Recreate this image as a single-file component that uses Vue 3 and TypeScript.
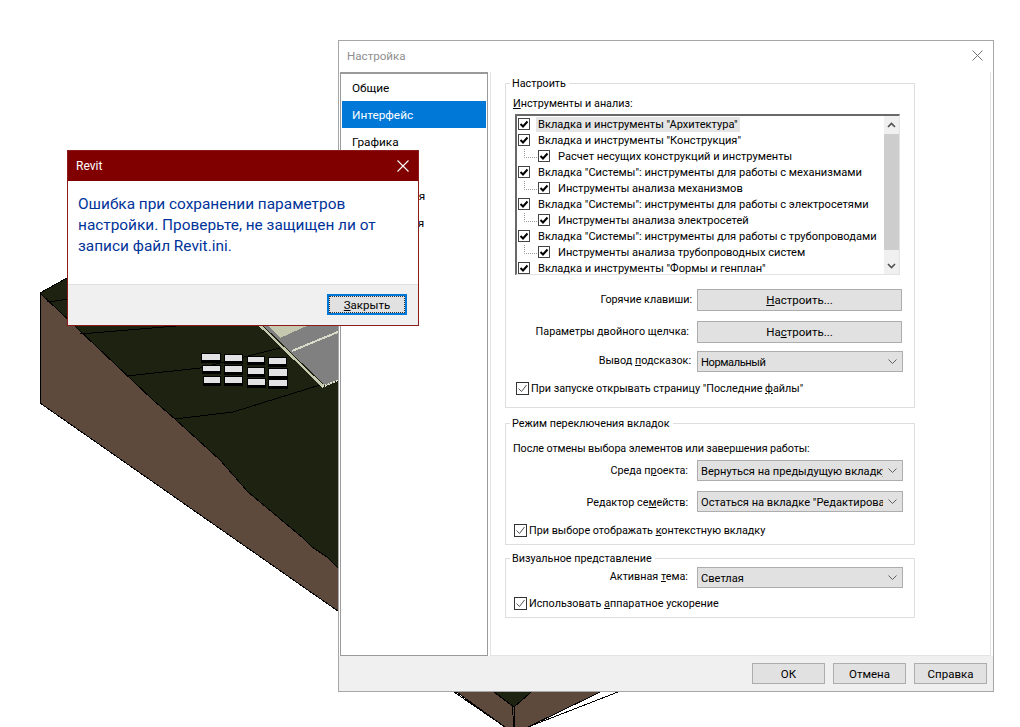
<script setup lang="ts">
interface TreeRow { label: string; child: boolean }
const navItems: string[] = ['Общие', 'Интерфейс', 'Графика', 'Аппаратура', 'Размещения', 'Орфография']
const rows: TreeRow[] = [
  { label: 'Вкладка и инструменты "Архитектура"', child: false },
  { label: 'Вкладка и инструменты "Конструкция"', child: false },
  { label: 'Расчет несущих конструкций и инструменты', child: true },
  { label: 'Вкладка "Системы": инструменты для работы с механизмами', child: false },
  { label: 'Инструменты анализа механизмов', child: true },
  { label: 'Вкладка "Системы": инструменты для работы с электросетями', child: false },
  { label: 'Инструменты анализа электросетей', child: true },
  { label: 'Вкладка "Системы": инструменты для работы с трубопроводами', child: false },
  { label: 'Инструменты анализа трубопроводных систем', child: true },
  { label: 'Вкладка и инструменты "Формы и генплан"', child: false },
]
interface Tile { x: number; y: number; w: number; h: number }
const tiles: Tile[] = [
  { x: 201, y: 353, w: 20, h: 9 }, { x: 202, y: 365, w: 19, h: 8 }, { x: 203, y: 376, w: 18, h: 9 },
  { x: 224, y: 354, w: 19, h: 9 }, { x: 224, y: 365, w: 19, h: 9 }, { x: 224, y: 376, w: 19, h: 9 },
  { x: 247, y: 356, w: 18, h: 8 }, { x: 247, y: 367, w: 18, h: 9 }, { x: 247, y: 378, w: 19, h: 9 },
  { x: 268, y: 357, w: 19, h: 9 }, { x: 268, y: 368, w: 20, h: 10 }, { x: 268, y: 379, w: 20, h: 9 },
]
</script>

<template>
  <div class="desk">
    <svg class="model" width="1020" height="727" viewBox="0 0 1020 727">
      <g shape-rendering="crispEdges" stroke="#000" stroke-width="1">
        <polygon points="40,293 153,400 175,419 220,460 248,492 303,538 312,547 327,557 345,575 345,616 40,403" fill="#5e4a3d" />
        <polygon points="40,293 67,278 345,278 345,575 327,557 312,547 303,538 248,492 220,460 175,419 153,400" fill="#1e2311" />
        <polyline points="47,302 70,299" fill="none" />
        <polyline points="80,334 200,324" fill="none" />
        <polyline points="127,376 200,368 280,348" fill="none" />
        <polyline points="175,419 233,412 320,385" fill="none" />
        <polygon points="260,325 345,325 345,378 323,386" fill="#808080" stroke="none" />
        <polygon points="267,325 309,325 280,338" fill="#c6c7af" stroke="none" />
        <polyline points="260,325 323,386" fill="none" stroke="#c6c7af" stroke-width="3" />
        <polyline points="262,325 323,384" fill="none" stroke="#1e2311" stroke-width="1" />
        <polyline points="292,351 345,329" fill="none" stroke="#dadac8" stroke-width="2" />
        <polyline points="322,387 345,377" fill="none" stroke="#dadac8" stroke-width="2" stroke-dasharray="2 1" />
        <polygon points="440,680 505,727 518,727 518,680" fill="#5e4a3d" />
        <polygon points="510,680 625,680 528,727 514,727" fill="#5e4a3d" />
        <polygon points="478,680 545,680 514,707" fill="#1e2311" />
        <polyline points="514,707 514,727" fill="none" />
        <polyline points="454,692 505,727" fill="none" />
        <polyline points="618,692 528,727" fill="none" />
      </g>
      <g v-for="(t, i) in tiles" :key="i" shape-rendering="crispEdges">
        <rect :x="t.x" :y="t.y" :width="t.w" :height="t.h + 1" fill="#000" />
        <rect :x="t.x + 1" :y="t.y + 1" :width="t.w - 2" :height="t.h - 3" fill="#e2e2e5" />
      </g>
    </svg>

    <section class="options">
      <header class="options-title">
        <span>Настройка</span>
        <svg class="options-close" width="11" height="11" viewBox="0 0 11 11"><path d="M0.5 0.5 10.5 10.5M10.5 0.5 0.5 10.5" stroke="#757575" stroke-width="1" fill="none" /></svg>
      </header>
      <div class="options-body">
        <nav class="nav">
          <div v-for="(item, i) in navItems" :key="item" class="nav-item" :class="{ active: i === 1 }">{{ item }}</div>
        </nav>
        <main class="panel">
          <fieldset class="group group-a">
            <legend>Настроить</legend>
            <div class="caption"><u>И</u>нструменты и анализ:</div>
            <div class="tree">
              <div class="tree-rows">
                <div v-for="(r, i) in rows" :key="i" class="tree-row" :class="{ child: r.child }">
                  <svg v-if="r.child" class="branch" width="13" height="16" viewBox="0 0 13 16"><path d="M0.5 1V9.5H13" fill="none" stroke="#9a9a9a" stroke-dasharray="1 1" /></svg>
                  <svg class="tick" width="12" height="12" viewBox="0 0 12 12"><rect x="0.5" y="0.5" width="11" height="11" fill="#fff" stroke="#444" /><path d="M2.5 6 5 8.5 9.5 3.5" fill="none" stroke="#000" stroke-width="2" /></svg>
                  <span class="tree-label" :class="{ current: i === 0 }">{{ r.label }}</span>
                </div>
              </div>
              <div class="scroll">
                <svg class="scroll-arrow" width="15" height="18" viewBox="0 0 15 18"><path d="M4 11 7.5 7.5 11 11" fill="none" stroke="#505050" stroke-width="1.6" /></svg>
                <div class="scroll-thumb"></div>
                <svg class="scroll-arrow end" width="15" height="18" viewBox="0 0 15 18"><path d="M4 8 7.5 11.5 11 8" fill="none" stroke="#505050" stroke-width="1.6" /></svg>
              </div>
            </div>
            <div class="field field-hot"><span class="field-label">Горячие клавиши:</span><button class="btn wide"><u>Н</u>астроить...</button></div>
            <div class="field field-dbl"><span class="field-label l2">Параметры двойного щелчка:</span><button class="btn wide">На<u>с</u>троить...</button></div>
            <div class="field field-tip"><span class="field-label l1">Вывод <u>п</u>одсказок:</span>
              <div class="select"><span class="select-text tight">Нормальный</span><svg width="9" height="5" viewBox="0 0 9 5"><path d="M0.5 0.5 4.5 4.5 8.5 0.5" fill="none" stroke="#606060" /></svg></div>
            </div>
            <label class="check check-a">
              <svg width="13" height="13" viewBox="0 0 13 13"><rect x="0.5" y="0.5" width="12" height="12" fill="#fff" stroke="#333" /><path d="M2.5 6.5 5.5 9.5 10.5 3" fill="none" stroke="#555" stroke-width="1" /></svg>
              <span>При запуске открывать страницу "Последние <u>ф</u>айлы"</span>
            </label>
          </fieldset>

          <fieldset class="group group-b">
            <legend>Режим переключения вкладок</legend>
            <div class="caption narrow">После отмены выбора элементов или завершения работы:</div>
            <div class="field field-env"><span class="field-label l3">Среда п<u>р</u>оекта:</span>
              <div class="select"><span class="select-text">Вернуться на предыдущую вкладку</span><svg width="9" height="5" viewBox="0 0 9 5"><path d="M0.5 0.5 4.5 4.5 8.5 0.5" fill="none" stroke="#606060" /></svg></div>
            </div>
            <div class="field field-fam"><span class="field-label l3">Редактор се<u>м</u>ейств:</span>
              <div class="select"><span class="select-text">Остаться на вкладке "Редактирование"</span><svg width="9" height="5" viewBox="0 0 9 5"><path d="M0.5 0.5 4.5 4.5 8.5 0.5" fill="none" stroke="#606060" /></svg></div>
            </div>
            <label class="check check-b">
              <svg width="13" height="13" viewBox="0 0 13 13"><rect x="0.5" y="0.5" width="12" height="12" fill="#fff" stroke="#333" /><path d="M2.5 6.5 5.5 9.5 10.5 3" fill="none" stroke="#555" stroke-width="1" /></svg>
              <span>При выборе отображать <u>к</u>онтекстную вкладку</span>
            </label>
          </fieldset>

          <fieldset class="group group-c">
            <legend>Визуальное представление</legend>
            <div class="field field-theme"><span class="field-label l3">Активная <u>т</u>ема:</span>
              <div class="select"><span class="select-text">Светлая</span><svg width="9" height="5" viewBox="0 0 9 5"><path d="M0.5 0.5 4.5 4.5 8.5 0.5" fill="none" stroke="#606060" /></svg></div>
            </div>
            <label class="check check-c">
              <svg width="13" height="13" viewBox="0 0 13 13"><rect x="0.5" y="0.5" width="12" height="12" fill="#fff" stroke="#333" /><path d="M2.5 6.5 5.5 9.5 10.5 3" fill="none" stroke="#555" stroke-width="1" /></svg>
              <span>Использовать <u>а</u>ппаратное ускорение</span>
            </label>
          </fieldset>
        </main>
      </div>
      <footer class="options-foot">
        <button class="btn foot">ОК</button>
        <button class="btn foot">Отмена</button>
        <button class="btn foot">Справка</button>
      </footer>
    </section>

    <section class="alert">
      <header class="alert-title">
        <span>Revit</span>
        <svg width="12" height="12" viewBox="0 0 12 12"><path d="M0.5 0.5 11.5 11.5M11.5 0.5 0.5 11.5" stroke="#fff" stroke-width="1.1" fill="none" /></svg>
      </header>
      <div class="alert-body">Ошибка при сохранении параметров настройки. Проверьте, не защищен ли от записи файл Revit.ini.</div>
      <footer class="alert-foot"><button class="btn close-btn"><span class="focus"><u>З</u>акрыть</span></button></footer>
    </section>
  </div>
</template>

<style scoped>
.desk { position: relative; width: 1020px; height: 727px; overflow: hidden; background: #fff; font-family: Roboto, "Noto Sans", sans-serif; font-size: 10.8px; color: #000; }
.model { position: absolute; left: 0; top: 0; }
button { font: inherit; color: inherit; padding: 0; }

.options { position: absolute; left: 338px; top: 40px; width: 656px; height: 652px; box-sizing: border-box; border: 1px solid #a6a6a6; background: #fff; display: flex; flex-direction: column; }
.options-title { height: 31px; flex: none; box-sizing: border-box; padding: 0 10px 2px 8px; display: flex; align-items: center; justify-content: space-between; color: #8f8f8f; font-size: 11.6px; }
.options-close { margin-bottom: 1px; }
.options-body { height: 584px; flex: none; display: flex; padding-left: 1px; }
.nav { width: 148px; box-sizing: border-box; border: 1px solid #9a9a9a; border-top-width: 2px; padding: 0 1px; flex: none; }
.nav-item { height: 27px; line-height: 29px; padding-left: 10px; font-size: 11.8px; }
.nav-item:nth-child(n+4) { letter-spacing: 0.25px; }
.nav-item.active { background: #0078d7; color: #fff; }
.panel { margin-left: 2px; width: 501px; box-sizing: border-box; border: 1px solid #e3e3e3; border-top: 0; padding: 0 0 0 14px; }

.group { margin: 0; padding: 0; border: 1px solid #dedede; width: 410px; box-sizing: border-box; position: relative; min-width: 0; }
.group legend { margin-left: 4px; padding: 0 3px 0 2px; line-height: 18px; height: 16px; }
.group-a { height: 333px; margin-top: 3px; }
.group-b { height: 130px; margin-top: 7px; }
.group-c { height: 68px; margin-top: 5px; }
.caption { padding-left: 7px; line-height: 16px; }
.group-a .caption { margin-top: 5px; }
.group-b .caption { margin-top: 10px; }
.narrow { letter-spacing: -0.1px; }

.tree { margin: 2px 0 0 9px; width: 385px; height: 161px; box-sizing: border-box; border: 1px solid #e3e3e3; border-top: 2px solid #696969; border-left: 2px solid #696969; display: flex; font-size: 11.1px; }
.tree-rows { flex: 1; overflow: hidden; }
.tree-row { height: 16px; display: flex; align-items: center; padding-left: 1px; position: relative; white-space: nowrap; }
.tree-row.child { padding-left: 21px; }
.branch { position: absolute; left: 7px; top: 0; }
.tick { flex: none; }
.tree-label { margin-left: 6px; padding: 0 2px; line-height: 15px; }
.current { background: #e5e5e5; }
.scroll { width: 15px; background: #f0f0f0; display: flex; flex-direction: column; flex: none; }
.scroll-arrow { flex: none; }
.scroll-thumb { height: 116px; background: #cdcdcd; flex: none; }
.scroll-arrow.end { margin-top: auto; }

.field { display: flex; align-items: center; }
.field-label { width: 186px; text-align: right; flex: none; margin-top: -2px; }
.l1 { width: 185px; }
.l2 { width: 183px; }
.l3 { width: 182px; margin-right: 3px; }
.field-env .field-label { margin-top: 0; }
.field-fam .field-label { margin-top: 2px; }
.btn { background: #e1e1e1; border: 1px solid #adadad; box-sizing: border-box; font-size: 11.5px; }
.wide { width: 205px; height: 22px; margin-left: 5px; }
.l2 + .wide { margin-left: 8px; }
.select { width: 206px; height: 21px; box-sizing: border-box; border: 1px solid #adadad; background: #e1e1e1; margin-left: 5px; display: flex; align-items: center; justify-content: space-between; padding: 0 5px 0 3px; flex: none; font-size: 11.1px; }
.l1 + .select { margin-left: 6px; }
.l3 + .select { margin-left: 6px; }
.select-text { width: 182px; overflow: hidden; white-space: nowrap; padding-top: 2px; }
.tight { letter-spacing: -0.4px; }
.field-hot { margin-top: 14px; }
.field-dbl { margin-top: 10px; }
.field-tip { margin-top: 8px; }
.field-env { margin-top: 3px; }
.field-fam { margin-top: 10px; }
.field-theme { margin-top: 1px; }
.check { display: flex; align-items: center; gap: 2px; padding-left: 10px; line-height: 16px; }
.check span { margin-top: 2px; }
.check-a { margin-top: 7px; }
.check-b { margin-top: 9px; padding-left: 8px; }
.check-c { margin-top: 6px; padding-left: 8px; }

.options-foot { flex: 1; background: #f0f0f0; display: flex; justify-content: flex-end; gap: 8px; padding: 7px 6px 0 0; }
.foot { width: 73px; height: 21px; }

.alert { position: absolute; left: 67px; top: 150px; width: 352px; height: 176px; box-sizing: border-box; border: 1px solid #8c1c1c; background: #fff; display: flex; flex-direction: column; }
.alert-title { height: 30px; flex: none; background: #800000; color: #fff; display: flex; align-items: center; justify-content: space-between; padding: 0 9px 0 8px; font-size: 12px; }
.alert-body { height: 103px; flex: none; box-sizing: border-box; padding: 13px 10px 0 10px; font-size: 15.4px; line-height: 20.8px; color: #003399; }
.alert-foot { flex: 1; background: #f0f0f0; border-top: 1px solid #dfdfdf; display: flex; justify-content: flex-end; padding: 9px 11px 0 0; }
.close-btn { width: 80px; height: 21px; border: 2px solid #0078d7; display: flex; }
.focus { flex: 1; border: 1px dotted #333; display: flex; align-items: center; justify-content: center; }
</style>
